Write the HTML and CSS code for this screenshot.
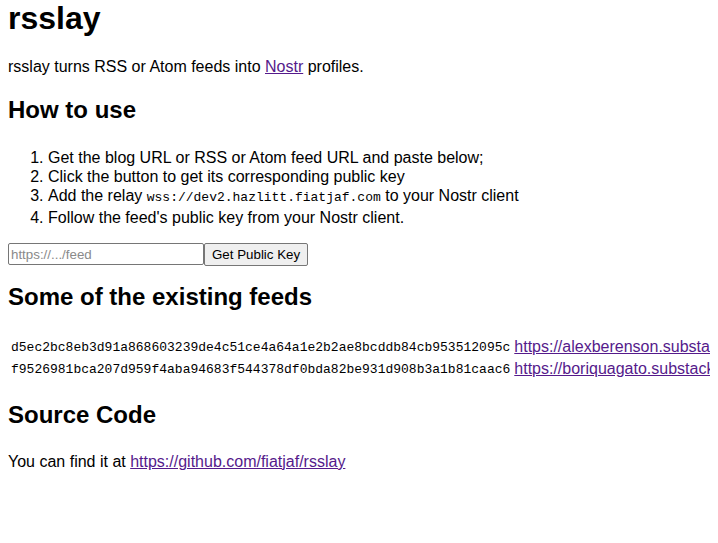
FILE: index.html
```html
<!DOCTYPE html>
<html>
<head>
<meta charset="utf-8">
<title>rsslay</title>
<link rel="stylesheet" href="styles.css">
</head>
<body>
<h1 class="title">rsslay</h1>
<p>rsslay turns RSS or Atom feeds into <a class="link" href="#">Nostr</a> profiles.</p>
<h2>How to use</h2>
<ol class="steps">
<li>Get the blog URL or RSS or Atom feed URL and paste below;</li>
<li>Click the button to get its corresponding public key</li>
<li>Add the relay <code class="mono">wss://dev2.hazlitt.fiatjaf.com</code> to your Nostr client</li>
<li>Follow the feed's public key from your Nostr client.</li>
</ol>
<form class="form">
<input class="url-input" type="text" placeholder="https://.../feed"><button class="btn" type="button">Get Public Key</button>
</form>
<h2 class="after-form">Some of the existing feeds</h2>
<div class="feeds-wrap">
<table class="feeds">
<tr><td class="mono">d5ec2bc8eb3d91a868603239de4c51ce4a64a1e2b2ae8bcddb84cb953512095c</td><td><a class="link" href="#">https://alexberenson.substack.com/feed</a></td></tr>
<tr><td class="mono">f9526981bca207d959f4aba94683f544378df0bda82be931d908b3a1b81caac6</td><td><a class="link" href="#">https://boriquagato.substack.com/feed</a></td></tr>
</table>
</div>
<h2>Source Code</h2>
<p>You can find it at <a class="link" href="#">https://github.com/fiatjaf/rsslay</a></p>
</body>
</html>
```
FILE: styles.css
```css
body {
  margin: 0 8px 8px;
  font-family: "Liberation Sans", Arial, sans-serif;
  font-size: 16px;
  color: #000;
  background: #fff;
}
.title {
  font-size: 32px;
  margin: 0 0 21.44px;
}
h2 {
  font-size: 24px;
  margin: 19.92px 0 23.5px;
}
h2.after-form {
  margin-top: 16.6px;
  margin-bottom: 24.5px;
}
p {
  margin: 16px 0;
}
.link {
  color: #551a8b;
}
.steps {
  margin: 16px 0;
  padding-left: 40px;
}
.steps li {
  line-height: 19.3px;
}
.mono {
  font-family: "Liberation Mono", "Courier New", monospace;
  font-size: 13px;
}
.form {
  display: flex;
  align-items: flex-start;
  margin: 0;
}
.url-input {
  width: 196px;
  box-sizing: border-box;
  height: 22px;
  font-family: "Liberation Sans", Arial, sans-serif;
  font-size: 13.33px;
  padding: 1px 2px;
  border: 1px solid #767676;
  border-radius: 2px;
  margin: 0;
}
.url-input::placeholder {
  color: #8a8a8a;
}
.btn {
  font-family: "Liberation Sans", Arial, sans-serif;
  font-size: 13.33px;
  padding: 1px 7px;
  height: 23px;
  border: 1px solid #767676;
  border-radius: 2px;
  background: #efefef;
  color: #000;
  margin: 0;
}
.feeds-wrap {
  margin-right: -8px;
  overflow: hidden;
}
.feeds {
  border-spacing: 2px;
  white-space: nowrap;
}
.feeds td {
  padding: 1px;
}
```
